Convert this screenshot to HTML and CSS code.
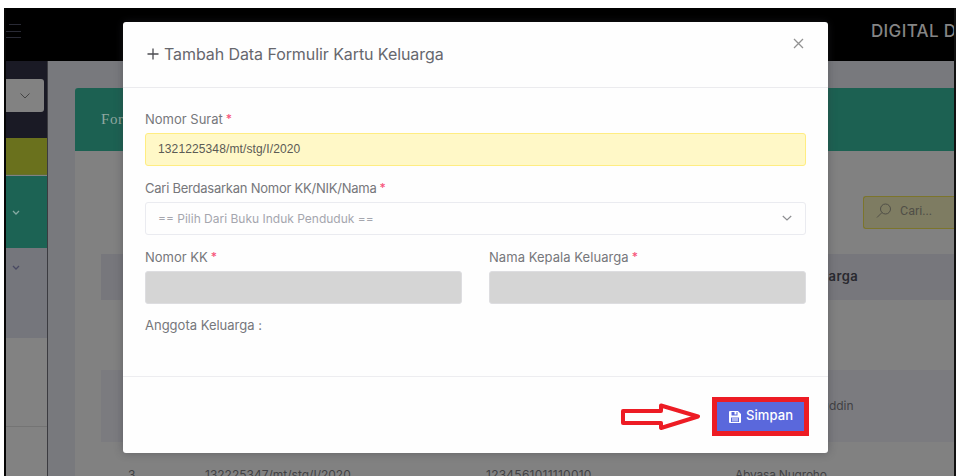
FILE: index.html
```html
<!DOCTYPE html>
<html lang="id">
<head>
<meta charset="utf-8">
<title>Formulir Kartu Keluarga</title>
<link rel="stylesheet" href="styles.css">
</head>
<body>
<div class="app">
  <header class="topbar">
    <svg class="burger" width="16" height="16" viewBox="0 0 16 16"><path d="M3 1.500H15M0 8.500H15M0 14.500H15"/></svg>
    <span class="brand">DIGITAL DESA</span>
  </header>
  <div class="columns">
    <aside class="sidebar">
      <div class="side-top"><div class="side-select"><svg width="12" height="8" viewBox="0 0 12 8"><path d="M1.500 1.500L6 6L10.500 1.500"/></svg></div></div>
      <div class="side-olive"></div>
      <div class="side-teal"><svg width="8" height="6" viewBox="0 0 8 6"><path d="M1 1L4 4L7 1"/></svg></div>
      <div class="side-sub"><svg width="8" height="6" viewBox="0 0 8 6"><path d="M1 1L4 4L7 1"/></svg></div>
      <div class="side-item"></div>
      <div class="side-item"></div>
    </aside>
    <main class="content">
      <section class="card">
        <div class="card-head">Formulir</div>
        <div class="tools">
          <div class="search"><svg width="16" height="16" viewBox="0 0 16 16"><circle cx="9.500" cy="6" r="5"/><path d="M6 9.500L1 14.500"/></svg><span>Cari...</span></div>
        </div>
        <div class="table">
          <div class="row head"><span></span><span></span><span></span><span>Keluarga</span></div>
          <div class="row"></div>
          <div class="row shade"><span></span><span></span><span></span><span>Saifuddin</span></div>
          <div class="row last"><span>3</span><span>132225347/mt/stg/I/2020</span><span class="nik">1234561011110010</span><span class="name">Abyasa Nugroho</span></div>
        </div>
      </section>
    </main>
  </div>
</div>

<div class="modal">
  <div class="modal-head">
    <svg class="plus" width="12" height="12" viewBox="0 0 12 12"><path d="M6 .5V11.500M.5 6H11.500"/></svg>
    <h1>Tambah Data Formulir Kartu Keluarga</h1>
    <svg class="close" width="11" height="11" viewBox="0 0 11 11"><path d="M1 1L10 10M10 1L1 10"/></svg>
  </div>
  <div class="modal-body">
    <div class="field">
      <label><span>Nomor Surat</span> <b>*</b></label>
      <div class="control filled">1321225348/mt/stg/I/2020</div>
    </div>
    <div class="field">
      <label><span class="tight">Cari Berdasarkan Nomor KK/NIK/Nama</span> <b>*</b></label>
      <div class="control select"><span>== Pilih Dari Buku Induk Penduduk ==</span><svg width="10" height="7" viewBox="0 0 10 7"><path d="M.8 1L5 5L9.200 1"/></svg></div>
    </div>
    <div class="pair">
      <div class="field">
        <label><span>Nomor KK</span> <b>*</b></label>
        <div class="control disabled"></div>
      </div>
      <div class="field">
        <label><span class="loose">Nama Kepala Keluarga</span> <b>*</b></label>
        <div class="control disabled"></div>
      </div>
    </div>
    <label class="members"><span>Anggota Keluarga :</span></label>
  </div>
  <div class="modal-foot">
    <svg class="arrow" width="80" height="30" viewBox="0 0 80 30"><path d="M3 9H41V3.500L78 14.500L41 26V21H3Z"/></svg>
    <button class="save"><svg width="12" height="12" viewBox="0 0 12 12"><path fill-rule="evenodd" d="M1 0H9L12 3V11Q12 12 11 12H1Q0 12 0 11V1Q0 0 1 0ZM2.500 1V4.500H8.500V1H7.500V3.500H5.500V1ZM2 6.500V11H10V6.500ZM3 7.500H9V8.500H3ZM3 9.500H9V10.300H3Z"/></svg><span>Simpan</span></button>
  </div>
</div>
</body>
</html>
```

FILE: styles.css
```css
* { box-sizing: border-box; }
body {
  margin: 0;
  width: 957px;
  height: 476px;
  overflow: hidden;
  background: #fff;
  font-family: Inter, "Open Sans", sans-serif;
  position: relative;
}
svg { display: block; flex: none; fill: none; stroke: currentColor; }
.app {
  height: 468px;
  margin: 8px 1px 0 4px;
  border-left: 2px solid #050505;
  border-right: 2px solid #111;
  overflow: hidden;
  display: flex;
  flex-direction: column;
}
.topbar {
  height: 53px;
  flex: none;
  background: #000;
  display: flex;
  justify-content: space-between;
  color: #858585;
  overflow: hidden;
}
.burger { margin-top: 15px; color: #292a35; }
.brand {
  width: 83px;
  padding-top: 13px;
  font-size: 17px;
  font-weight: 500;
  line-height: 20px;
  white-space: nowrap;
  letter-spacing: 0.35px;
}
.columns { flex: 1; display: flex; min-height: 0; }
.sidebar { width: 42px; flex: none; display: flex; flex-direction: column; border-right: 1px solid #3b3b40; background: #828282; }
.side-top { height: 77px; flex: none; background: #1a1a25; padding-top: 18px; }
.side-select { width: 38px; height: 33px; background: #828282; border-radius: 0 3px 3px 0; display: flex; align-items: center; padding-left: 13px; color: #444; }
.side-olive { height: 37px; flex: none; background: #6a711d; border-bottom: 1px solid #65702f; }
.side-teal { height: 72px; flex: none; margin-top: 1px; background: #1c6354; color: #86aaa3; padding: 34px 0 0 6px; }
.side-sub { height: 90px; flex: none; background: #75767c; color: #494962; padding: 17px 0 0 6px; }
.side-teal svg, .side-sub svg { stroke-width: 1.3; }
.side-item { height: 89px; flex: none; border-bottom: 1px solid #747474; }
.content { flex: 1; min-width: 0; background: #78797d; padding: 27px 0 0 27px; }
.card { height: 100%; background: #818181; border-radius: 3px 0 0 0; overflow: hidden; }
.card-head {
  height: 63px;
  background: #1c6152;
  color: #91a8a1;
  font: 15px/62px "Liberation Serif", serif;
  letter-spacing: 0.6px;
  padding-left: 26px;
}
.tools { height: 103px; padding-top: 45px; display: flex; justify-content: flex-end; }
.search {
  width: 91px;
  height: 33px;
  border: 1px solid #7c752c;
  border-right: 0;
  border-radius: 3px 0 0 3px;
  background: #7e7c62;
  display: flex;
  align-items: center;
  gap: 8px;
  padding-left: 12px;
  color: #504f47;
  font: 12.5px/16px Roboto, sans-serif;
}
.search svg { margin-top: -3px; }
.search span { margin-top: -3px; }
.table { margin-left: 26px; font-size: 12px; color: #414144; }
.row { height: 70px; display: grid; grid-template-columns: 104px 282px 248px 1fr; align-items: center; white-space: nowrap; }
.row.head { height: 46px; background: #77777c; color: #29292f; font-weight: 600; font-size: 13px; }
.row.head span:last-child { padding-left: 64px; letter-spacing: 0.45px; margin-top: -3px; }
.row.shade { height: 72px; background: #7b7b7f; }
.row.shade span:last-child { padding-left: 65px; margin-top: -1px; }
.row.last { height: 64px; padding-left: 27px; grid-template-columns: 77px 281px 249px 1fr; }
.nik { letter-spacing: 0.25px; }
.name { letter-spacing: -0.2px; }

.modal {
  position: absolute;
  left: 123px;
  top: 22px;
  width: 705px;
  height: 431px;
  background: #fefefe;
  border-radius: 3px;
  box-shadow: 0 0 9px rgba(50, 50, 60, 0.4);
  display: flex;
  flex-direction: column;
}
.modal-head {
  height: 66px;
  flex: none;
  border-bottom: 1px solid #ebebee;
  display: flex;
  padding: 0 24px;
}
.plus { margin-top: 26px; color: #4b4b50; stroke-width: 1.3; }
.modal-head h1 {
  margin: 21px auto 0 5px;
  font-size: 16px;
  line-height: 22px;
  font-weight: 400;
  letter-spacing: -0.08px;
  color: #66676d;
  white-space: nowrap;
}
.close { margin-top: 16px; color: #929292; stroke-width: 1.3; }
.modal-body { flex: 1; padding: 21px 22px 0; color: #76777b; }
label { display: flex; gap: 3px; height: 20px; line-height: 20px; font-size: 13px; white-space: nowrap; }
label b { color: #f7557b; font-weight: 500; font-size: 12px; }
.tight { letter-spacing: -0.24px; }
.loose { letter-spacing: 0.05px; }
.members { margin-top: -1px; }
.field { height: 69px; }
.control { height: 33px; margin-top: 4px; border: 1px solid #eaebf0; border-radius: 3px; }
.filled { background: #fff8c7; border-color: #ffed82; color: #5b5b55; font: 12px/30px "Liberation Sans", Arial, sans-serif; letter-spacing: 0.12px; padding-left: 12px; }
.select { display: flex; align-items: center; justify-content: space-between; padding: 0 13px 0 12px; color: #a5a6ae; font-size: 12px; }
.select svg { color: #8d8e91; stroke-width: 1.2; }
.disabled { background: #d5d5d5; border-color: #dddde0; }
.pair { display: grid; grid-template-columns: 1fr 1fr; gap: 27px; }
.modal-foot { height: 77px; flex: none; border-top: 1px solid #ededf0; display: flex; justify-content: flex-end; padding-right: 19px; }
.arrow { margin: 25px 12px 0 0; color: #ed1c24; stroke-width: 4; stroke-linejoin: round; }
.save {
  width: 97px;
  height: 39px;
  margin: 20px 0 0;
  border: 5px solid #ed1c24;
  background: #5a68dc;
  color: #fff;
  display: flex;
  align-items: center;
  padding: 0 0 1px 12px;
  gap: 5px;
  font: 500 13px/20px Inter, sans-serif;
  letter-spacing: 0.1px;
}
.save svg { fill: #fff; stroke: none; margin-top: 1px; }
.save span { margin-top: -3px; }
```
